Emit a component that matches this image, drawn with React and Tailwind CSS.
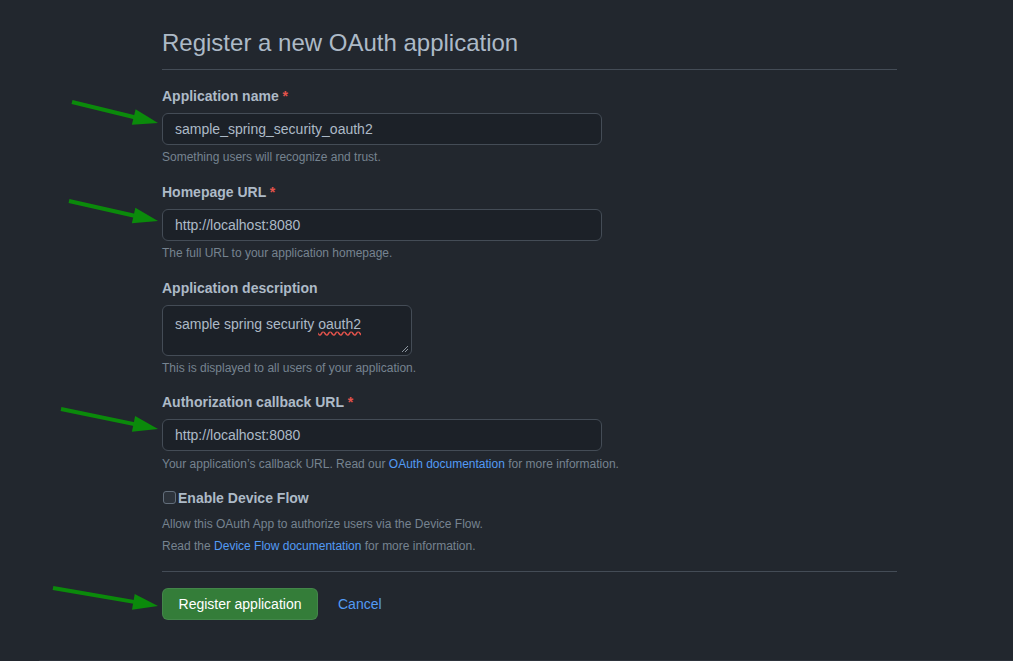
import React from "react";

const arrows = [
  { from: [72, 102], to: [158, 123] },
  { from: [69, 201], to: [158, 221] },
  { from: [61, 409], to: [158, 429] },
  { from: [53, 588], to: [158, 606] },
];

function Arrow({ from, to }) {
  const dx = to[0] - from[0];
  const dy = to[1] - from[1];
  const len = Math.hypot(dx, dy);
  const ux = dx / len;
  const uy = dy / len;
  const bx = to[0] - ux * 25;
  const by = to[1] - uy * 25;
  const px = -uy * 8;
  const py = ux * 8;
  return (
    <g fill="#0b8a0b" stroke="#0b8a0b">
      <line x1={from[0]} y1={from[1]} x2={bx + ux * 2} y2={by + uy * 2} strokeWidth="4" />
      <polygon points={`${to[0]},${to[1]} ${bx + px},${by + py} ${bx - px},${by - py}`} stroke="none" />
    </g>
  );
}

function Label({ children, required }) {
  return (
    <div className="text-sm leading-[21px] font-bold text-[#adbac7]">
      {children}
      {required && <span className="text-[#e5534b]"> *</span>}
    </div>
  );
}

function Note({ children, className = "" }) {
  return <p className={"text-xs leading-[18px] text-[#768390] " + className}>{children}</p>;
}

function TextInput({ value }) {
  return (
    <div className="mt-[6px] w-[440px] h-[32px] rounded-md border border-[#444c56] bg-[#1c2128] px-3 flex items-center text-sm text-[#adbac7]">
      {value}
    </div>
  );
}

function Field({ label, required, value, note, first }) {
  return (
    <div className={first ? "" : "mt-[16px]"}>
      <Label required={required}>{label}</Label>
      <TextInput value={value} />
      <Note className="mt-[3px]">{note}</Note>
    </div>
  );
}

export default function App() {
  return (
    <div className="relative h-[661px] overflow-hidden bg-[#22272e] font-['Liberation_Sans',Arial,sans-serif] flex flex-col">
      <div className="flex-1 pl-[162px] pt-[25px]">
        <div className="w-[735px]">
          <h2 className="text-2xl leading-9 font-normal text-[#adbac7] pb-2 border-b border-[#444c56]">
            Register a new OAuth application
          </h2>

          <div className="mt-[16px]">
            <Field
              first
              label="Application name"
              required
              value="sample_spring_security_oauth2"
              note="Something users will recognize and trust."
            />
            <Field
              label="Homepage URL"
              required
              value="http://localhost:8080"
              note="The full URL to your application homepage."
            />

            <div className="mt-[16px]">
              <Label>Application description</Label>
              <div className="relative mt-[6px] w-[250px] h-[51px] rounded-md border border-[#444c56] bg-[#1c2128] px-3 pt-[8px] text-sm leading-5 text-[#adbac7]">
                sample spring security{" "}
                <span className="underline decoration-wavy decoration-[#e5534b] underline-offset-2">oauth2</span>
                <svg className="absolute right-[2px] bottom-[2px]" width="8" height="8" viewBox="0 0 8 8">
                  <path d="M7 1L1 7M7 4L4 7" stroke="#8b949e" strokeWidth="1" />
                </svg>
              </div>
              <Note className="mt-[3px]">This is displayed to all users of your application.</Note>
            </div>

            <div className="mt-[15px]">
              <Label required>Authorization callback URL</Label>
              <TextInput value="http://localhost:8080" />
              <Note className="mt-[4px]">
                Your application’s callback URL. Read our{" "}
                <a className="text-[#539bf5]">OAuth documentation</a> for more information.
              </Note>
            </div>

            <div className="mt-[14px] flex items-center h-[21px]">
              <span className="ml-px w-[13px] h-[13px] rounded-[3px] border border-[#636e7b] bg-[#2d333b]" />
              <span className="ml-[2px] text-sm font-bold text-[#adbac7]">Enable Device Flow</span>
            </div>
            <Note className="mt-[7px]">Allow this OAuth App to authorize users via the Device Flow.</Note>
            <Note className="mt-[4px]">
              Read the <a className="text-[#539bf5]">Device Flow documentation</a> for more information.
            </Note>
          </div>

          <div className="mt-[16px] border-t border-[#444c56]" />

          <div className="mt-[16px] flex items-center">
            <button className="h-[32px] w-[156px] rounded-md border border-[rgba(205,217,229,0.1)] bg-[#347d39] text-sm text-[#ffffff]">
              Register application
            </button>
            <a className="ml-[20px] text-sm text-[#539bf5]">Cancel</a>
          </div>
        </div>
      </div>
      <div className="ml-[39px] h-px bg-[#2d333b]" />

      <svg className="absolute inset-0 pointer-events-none" width="1013" height="661">
        {arrows.map((a, i) => (
          <Arrow key={i} {...a} />
        ))}
      </svg>
    </div>
  );
}
